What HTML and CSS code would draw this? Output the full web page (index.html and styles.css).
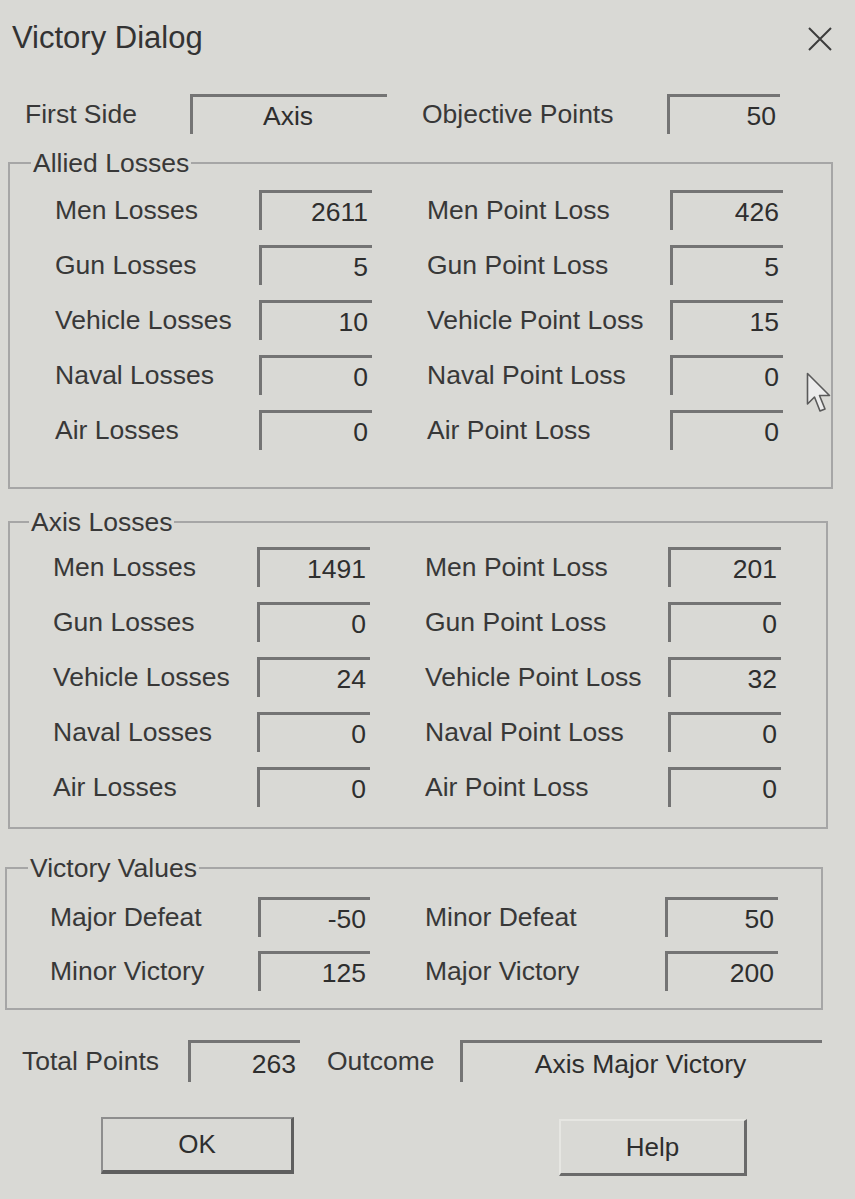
FILE: index.html
```html
<!DOCTYPE html>
<html lang="en">
<head>
  <meta charset="UTF-8">
  <title>Victory Dialog</title>
  <link rel="stylesheet" href="styles.css">
</head>
<body>
<div class="dialog">
  <div class="titlebar">
    <span class="title">Victory Dialog</span>
    <svg class="close" width="26" height="26" viewBox="0 0 26 26">
      <path d="M2 2 L24 24 M24 2 L2 24" stroke="#3c3c3c" stroke-width="2" fill="none"/>
    </svg>
  </div>

  <div class="toprow">
    <span class="lbl">First Side</span>
    <div class="field center">Axis</div>
    <span class="lbl rlbl">Objective Points</span>
    <div class="field">50</div>
  </div>

  <fieldset class="group allied">
    <legend>Allied Losses</legend>
    <div class="grid">
      <span class="lbl">Men Losses</span><div class="field">2611</div>
      <span class="lbl rlbl">Men Point Loss</span><div class="field">426</div>
      <span class="lbl">Gun Losses</span><div class="field">5</div>
      <span class="lbl rlbl">Gun Point Loss</span><div class="field">5</div>
      <span class="lbl">Vehicle Losses</span><div class="field">10</div>
      <span class="lbl rlbl">Vehicle Point Loss</span><div class="field">15</div>
      <span class="lbl">Naval Losses</span><div class="field">0</div>
      <span class="lbl rlbl">Naval Point Loss</span><div class="field">0</div>
      <span class="lbl">Air Losses</span><div class="field">0</div>
      <span class="lbl rlbl">Air Point Loss</span><div class="field">0</div>
    </div>
    <svg class="cursor" width="26" height="42" viewBox="0 0 26 42">
      <path d="M1.5 1.5 L1.5 32 L8.5 25 L14 39 L19 37 L13.5 23.5 L23.5 23.5 Z" fill="#ececec" stroke="#5a5a5a" stroke-width="1.6" stroke-linejoin="round"/>
    </svg>
  </fieldset>

  <fieldset class="group axis">
    <legend>Axis Losses</legend>
    <div class="grid">
      <span class="lbl">Men Losses</span><div class="field">1491</div>
      <span class="lbl rlbl">Men Point Loss</span><div class="field">201</div>
      <span class="lbl">Gun Losses</span><div class="field">0</div>
      <span class="lbl rlbl">Gun Point Loss</span><div class="field">0</div>
      <span class="lbl">Vehicle Losses</span><div class="field">24</div>
      <span class="lbl rlbl">Vehicle Point Loss</span><div class="field">32</div>
      <span class="lbl">Naval Losses</span><div class="field">0</div>
      <span class="lbl rlbl">Naval Point Loss</span><div class="field">0</div>
      <span class="lbl">Air Losses</span><div class="field">0</div>
      <span class="lbl rlbl">Air Point Loss</span><div class="field">0</div>
    </div>
  </fieldset>

  <fieldset class="group values">
    <legend>Victory Values</legend>
    <div class="grid">
      <span class="lbl">Major Defeat</span><div class="field">-50</div>
      <span class="lbl rlbl">Minor Defeat</span><div class="field">50</div>
      <span class="lbl">Minor Victory</span><div class="field">125</div>
      <span class="lbl rlbl">Major Victory</span><div class="field">200</div>
    </div>
  </fieldset>

  <div class="totalrow">
    <span class="lbl">Total Points</span>
    <div class="field">263</div>
    <span class="lbl rlbl">Outcome</span>
    <div class="field center">Axis Major Victory</div>
  </div>

  <div class="buttons">
    <button class="btn ok">OK</button>
    <button class="btn help">Help</button>
  </div>
</div>
</body>
</html>
```

FILE: styles.css
```css
* { margin: 0; padding: 0; box-sizing: border-box; }

body {
  background: #d9d9d5;
  color: #2e2e2e;
  font-family: "Liberation Sans", Arial, sans-serif;
  font-size: 26.5px;
  width: 855px;
  height: 1199px;
  overflow: hidden;
}

.dialog { position: relative; }

.titlebar {
  display: flex;
  justify-content: space-between;
  align-items: center;
  height: 40px;
  margin-top: 18px;
  padding: 0 22px 0 12px;
}
.title { font-size: 31px; line-height: 40px; color: #333; }
.close { margin-top: 2px; }

.lbl { line-height: 40px; color: #383838; white-space: nowrap; }
.rlbl { padding-left: 35px; }

.field {
  height: 40px;
  border-top: 3px solid #747474;
  border-left: 3px solid #747474;
  text-align: right;
  padding: 0 4px 0 0;
  line-height: 38px;
  color: #2e2e2e;
  white-space: nowrap;
}
.field.center { text-align: center; }

.toprow {
  display: grid;
  grid-template-columns: 165px 197px 280px 113px;
  align-items: center;
  margin-top: 36px;
  padding-left: 25px;
}

.group {
  position: relative;
  border: 2px solid #a6a6a6;
}
.group legend {
  line-height: 30px;
  padding: 0 2px;
  color: #383838;
}
.group .grid {
  display: grid;
  grid-template-columns: 204px 113px 298px 113px;
  row-gap: 15px;
  align-items: center;
}
.group .grid .rlbl { padding-left: 55px; }

.allied { margin: 14px 22px 0 8px; }
.allied legend { margin-left: 21px; }
.allied .grid { padding: 12px 0 37px 45px; }

.axis { margin: 18px 27px 0 8px; }
.axis legend { margin-left: 19px; }
.axis .grid { padding: 10px 0 20px 43px; }

.values { margin: 24px 32px 0 5px; }
.values legend { margin-left: 21px; }
.values .grid {
  grid-template-columns: 208px 112px 295px 113px;
  row-gap: 14px;
  padding: 14px 0 17px 43px;
}

.cursor {
  position: absolute;
  left: 796px;
  top: 194px;
}

.totalrow {
  display: grid;
  grid-template-columns: 166px 112px 160px 362px;
  align-items: center;
  margin-top: 30px;
  padding-left: 22px;
}
.totalrow .rlbl { padding-left: 27px; }
.totalrow .field { height: 42px; line-height: 42px; }

.buttons {
  display: flex;
  align-items: flex-start;
  gap: 265px;
  margin-top: 35px;
  padding-left: 101px;
}
.btn {
  font-family: inherit;
  font-size: 26px;
  color: #2e2e2e;
  background: #d9d9d5;
  height: 57px;
  cursor: pointer;
}
.ok {
  width: 193px;
  border-top: 2px solid #8e8e8e;
  border-left: 2px solid #8e8e8e;
  border-right: 3px solid #5e5e5e;
  border-bottom: 4px solid #5e5e5e;
}
.help {
  width: 188px;
  margin-top: 2px;
  border-top: 2px solid #e6e6e2;
  border-left: 2px solid #e6e6e2;
  border-right: 3px solid #6a6a6a;
  border-bottom: 3px solid #6a6a6a;
}
```
